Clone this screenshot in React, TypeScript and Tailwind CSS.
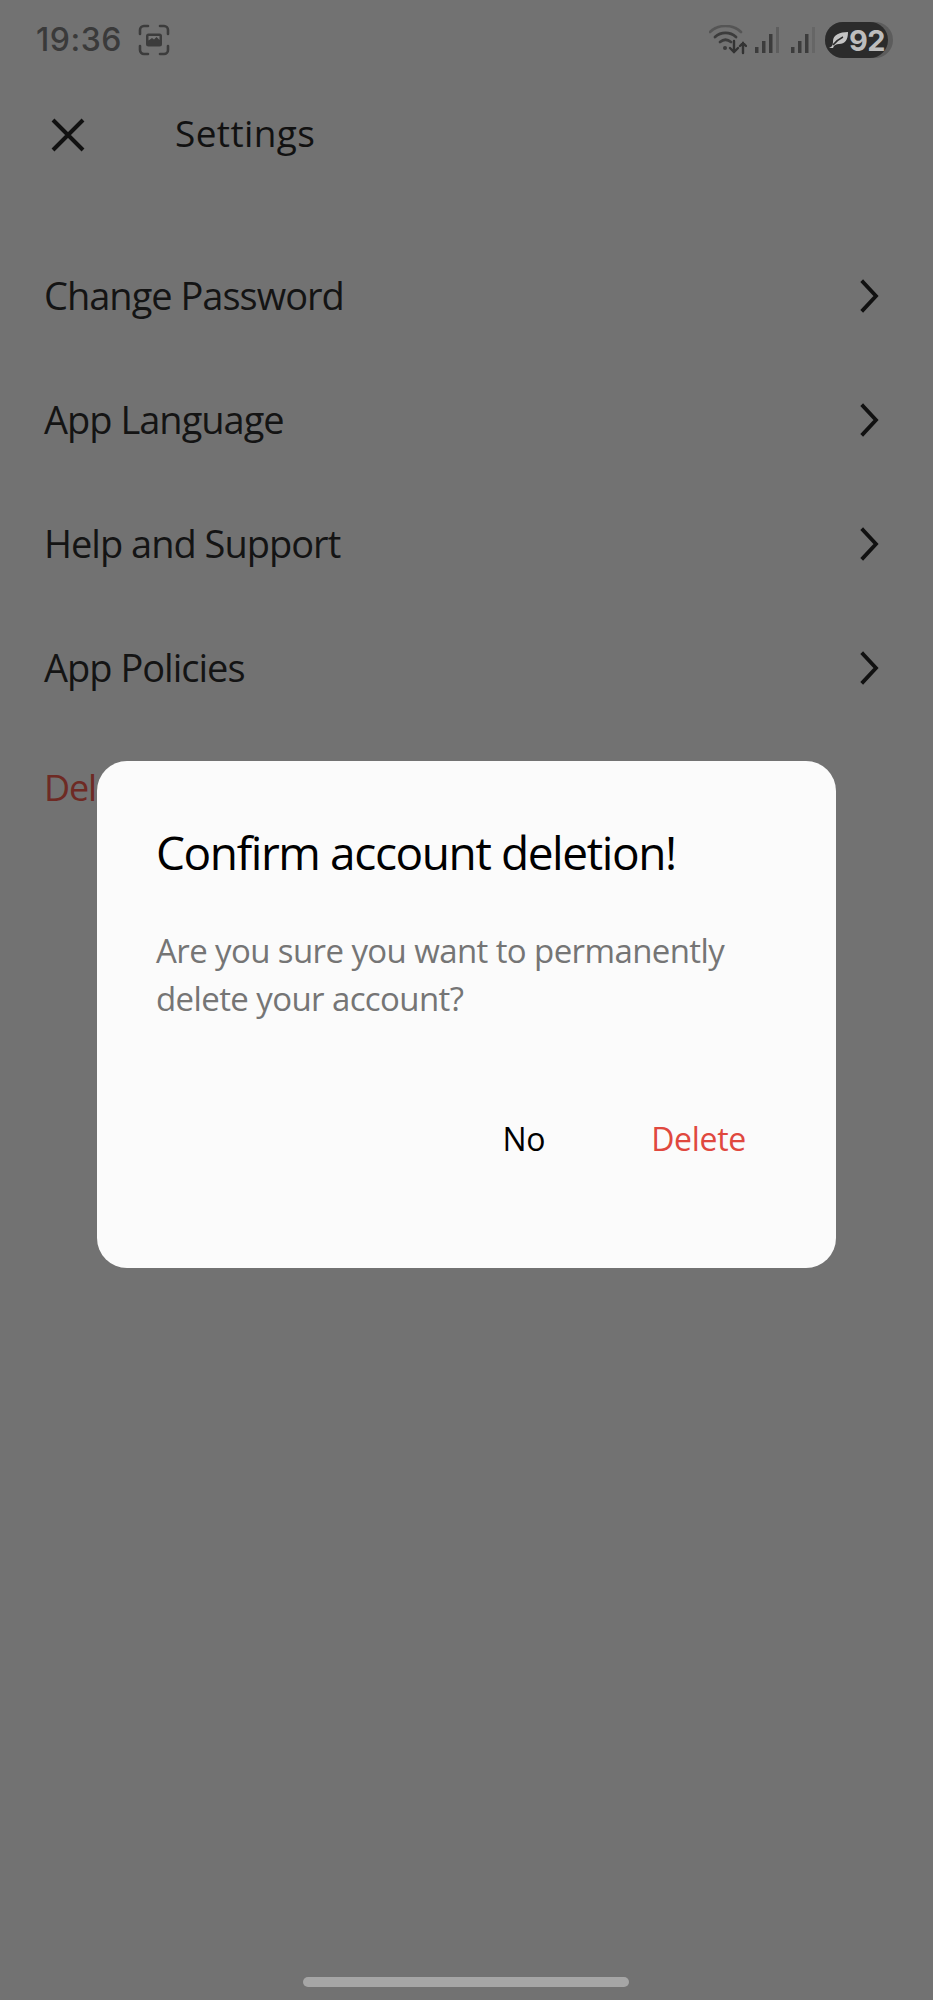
import React from "react";

const rows = ["Change Password", "App Language", "Help and Support", "App Policies"];
const font = "[font-family:'Open_Sans','Noto_Sans',sans-serif] [font-stretch:88%]";

function Chevron() {
  return (
    <svg width="22" height="34" viewBox="0 0 22 34" fill="none" stroke="#111" strokeWidth="3.800" strokeLinecap="square" strokeLinejoin="miter">
      <path d="M4 3 L17 17 L4 31" />
    </svg>
  );
}

function StatusLeft() {
  return (
    <div className="flex items-center gap-[16px]">
      <span className="[font-family:'Inter',sans-serif] text-[32px] font-medium leading-[40px] text-[#3a3a3a] tracking-[0.5px]">19:36</span>
      <svg width="32" height="32" viewBox="0 0 32 32" fill="none">
        <path d="M2 10V6a4 4 0 0 1 4-4h4M22 2h4a4 4 0 0 1 4 4v4M30 22v4a4 4 0 0 1-4 4h-4M10 30H6a4 4 0 0 1-4-4v-4" stroke="#3c3c3c" strokeWidth="2.6" strokeLinecap="round" />
        <rect x="8" y="9.500" width="16" height="13" rx="2.500" fill="#3c3c3c" />
        <path d="M10.500 12h11v4l-3-3-2.500 2.500-2-1.500-3.500 2.500z" fill="#777" />
      </svg>
    </div>
  );
}

function StatusRight() {
  const bars = (x: number, op: string) => (
    <svg width="26" height="26" viewBox="0 0 26 26">
      <rect x="1" y="20" width="3.500" height="6" fill="#3c3c3c" />
      <rect x="8" y="14" width="3.500" height="12" fill="#3c3c3c" />
      <rect x="15" y="7" width="3.500" height="19" fill="#3c3c3c" />
      <rect x={x} y="0" width="3" height="26" fill={op} />
    </svg>
  );
  return (
    <div className="flex items-center">
      <svg width="38" height="30" viewBox="0 0 38 30" fill="none" strokeLinecap="round">
        <path d="M1 7C9-1 24-1 32 7" stroke="#555" strokeWidth="2.600" />
        <path d="M6 12c6-5.500 15-5.500 21 0" stroke="#3c3c3c" strokeWidth="2.800" />
        <path d="M11 17c3.500-2.800 7.500-2.800 11 0" stroke="#3c3c3c" strokeWidth="2.800" />
        <circle cx="16" cy="23" r="2" fill="#3c3c3c" />
        <path d="M25 16v11M21 23l4 4 4-4" stroke="#333" strokeWidth="2.400" />
        <path d="M34 28V18M31 21l3-3 3 3" stroke="#333" strokeWidth="2.400" />
      </svg>
      <div className="ml-[7px]">{bars(22, "#5e5e5e")}</div>
      <div className="ml-[10px]">{bars(22, "#666")}</div>
      <div className="relative ml-[9px] flex h-[36px] w-[68px] items-center rounded-full bg-[#5c5c5c]">
        <div className="flex h-[36px] w-[63px] items-center justify-end rounded-full bg-[#2b2b2b] pr-[3px]">
          <span className="[font-family:'Inter',sans-serif] text-[29px] font-bold leading-none tracking-[-0.5px] text-[#bdbdbd]">92</span>
        </div>
        <svg className="absolute left-[3px] top-[8px]" width="24" height="20" viewBox="0 0 24 20">
          <path d="M1 18C4 17 5 15 5 11 5 5 12 2 20 2c0 8-3 12-9 12-3 0-5 1-6 4z" fill="#c4c4c4" />
          <path d="M5 15c3-4 6-6 10-8" stroke="#2b2b2b" strokeWidth="1.500" fill="none" />
        </svg>
      </div>
    </div>
  );
}

export default function App() {
  return (
    <div className={`relative flex h-[2000px] w-[933px] flex-col overflow-hidden bg-[#727272] ${font}`}>
      <div className="flex h-[80px] items-center justify-between pl-[36px] pr-[40px]">
        <StatusLeft />
        <StatusRight />
      </div>

      <div className="flex h-[110px] items-center pl-[50px]">
        <svg width="36" height="36" viewBox="0 0 36 36" stroke="#111" strokeWidth="4" fill="none">
          <path d="M3 3 L33 33 M33 3 L3 33" />
        </svg>
        <span className="ml-[89px] pb-[5px] text-[37px] leading-[50px] tracking-[0.4px] text-[#111]">Settings</span>
      </div>

      <div className="flex flex-col pl-[44px] pr-[52px] pt-[44px]">
        {rows.map((r) => (
          <div key={r} className="flex h-[124px] items-center justify-between">
            <span className="pb-[2px] text-[38px] leading-[50px] tracking-[-1px] text-[#141414]">{r}</span>
            <Chevron />
          </div>
        ))}
        <div className="flex h-[116px] items-center">
          <span className="text-[36px] leading-[50px] tracking-[-1.2px] text-[#6e2a24]">Delete Account</span>
        </div>
      </div>

      <div className="absolute left-[97px] top-[761px] flex h-[507px] w-[739px] flex-col rounded-[30px] bg-[#fbfbfb] pl-[59px] pr-[90px]">
        <h2 className="mt-[61px] text-[46px] font-normal leading-[60px] tracking-[-1.4px] text-black">Confirm account deletion!</h2>
        <p className="mr-[10px] mt-[45px] text-[33px] leading-[48px] tracking-[-0.6px] text-[#757575]">Are you sure you want to permanently delete your account?</p>
        <div className="mt-[91px] flex items-center justify-end gap-[106px]">
          <span className="text-[32px] leading-[50px] tracking-[-0.3px] text-black">No</span>
          <span className="text-[32px] leading-[50px] tracking-[-0.3px] text-[#e0483e]">Delete</span>
        </div>
      </div>

      <div className="absolute bottom-[13px] left-[303px] h-[10px] w-[326px] rounded-full bg-[#a6a6a6]" />
    </div>
  );
}
